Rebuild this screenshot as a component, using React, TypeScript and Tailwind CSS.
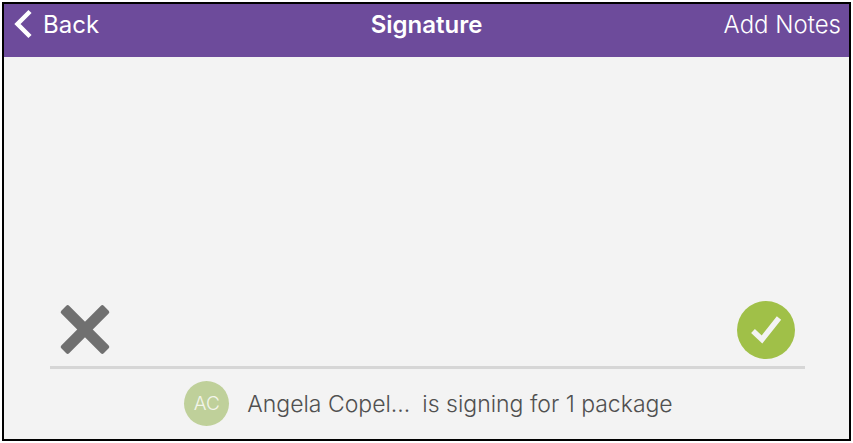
import React from "react";

function Header() {
  return (
    <header className="grid h-[53px] shrink-0 grid-cols-3 items-start bg-[#6d4b9b] px-2 pt-[3px] text-[24px] leading-9 text-white">
      <button type="button" className="flex items-center gap-[7px] justify-self-start font-normal">
        <svg className="h-9 w-6" viewBox="0 0 24 36" fill="none" aria-hidden="true">
          <path d="M18 4.500 L5.500 17 L18 29.500" stroke="currentColor" strokeWidth="4.500" />
        </svg>
        Back
      </button>
      <h1 className="justify-self-center font-semibold">Signature</h1>
      <button type="button" className="justify-self-end font-light">
        Add Notes
      </button>
    </header>
  );
}

function SignaturePad() {
  return (
    <section
      aria-label="Signature area"
      className="mr-11 ml-[46px] flex flex-1 items-end justify-between border-b-[3px] border-[#d6d6d6] pb-[7px]"
    >
      <button type="button" aria-label="Clear signature" className="ml-2 h-[58px]">
        <svg className="h-[58px] w-[54px]" viewBox="0 0 54 58" fill="#707070" aria-hidden="true">
          <rect x="-3" y="23" width="60" height="11" rx="2" transform="rotate(45 27 28.500)" />
          <rect x="-3" y="23" width="60" height="11" rx="2" transform="rotate(-45 27 28.500)" />
        </svg>
      </button>
      <button
        type="button"
        aria-label="Accept signature"
        className="mr-[10px] size-[58px] rounded-full bg-[#a0c048]"
      >
        <svg className="size-[58px]" viewBox="0 0 58 58" fill="none" aria-hidden="true">
          <path d="M16 30 L25 38.500 L42 17" stroke="#f3f3f3" strokeWidth="5.500" />
        </svg>
      </button>
    </section>
  );
}

function SignerBar() {
  return (
    <footer className="flex h-[70px] shrink-0 items-center justify-center pb-px pl-1 text-[23px] leading-8 font-light text-[#505050]">
      <span className="mr-[18px] flex size-[45px] items-center justify-center rounded-full bg-[#bfd09a] text-[19px] text-[#f3f5ea]">
        AC
      </span>
      <span className="mr-3 whitespace-nowrap">Angela Copel…</span>
      <span className="whitespace-nowrap">is signing for 1 package</span>
    </footer>
  );
}

export default function App() {
  return (
    <div className="flex min-h-screen bg-white p-[2px] font-['Inter','Liberation_Sans',sans-serif]">
      <main className="flex flex-1 flex-col border-2 border-black bg-[#f3f3f3]">
        <Header />
        <SignaturePad />
        <SignerBar />
      </main>
    </div>
  );
}
